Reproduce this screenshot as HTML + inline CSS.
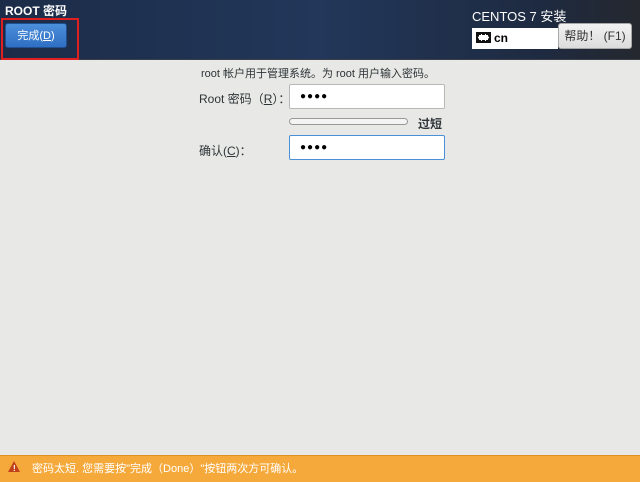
<!DOCTYPE html>
<html><head><meta charset="utf-8"><style>
body{margin:0;width:640px;height:481px;overflow:hidden;background:#e8e8e7;font-family:"Liberation Sans","Noto Sans CJK SC",sans-serif;position:relative}
.hdr{position:absolute;left:0;top:0;width:640px;height:59px;background:linear-gradient(90deg,#1c2c48 0%,#22375a 50%,#1e2a40 85%,#25282e 100%);border-bottom:1px solid #3a3f47}
.a{position:absolute}
.t{color:#fff;font-size:12px}
.done{left:5px;top:23px;width:62px;height:25px;background:linear-gradient(#4c8fdb,#2f6fc4);border:1px solid #1f4f8f;border-radius:3px;color:#fff;font-size:11px;text-align:center;line-height:24px;box-sizing:border-box}
.red{left:1px;top:18px;width:78px;height:42px;border:2px solid #e02020;box-sizing:border-box}
.inp{background:#fff;border:1px solid #b8b8b8;box-sizing:border-box;border-radius:2px}
.lbl{font-size:12px;color:#2e3436}
.dots{font-size:10px;letter-spacing:1px;color:#000;padding-left:10px;line-height:23px}
</style></head><body>
<div class="hdr"></div>
<div class="a t" style="left:5px;top:2px;font-weight:bold">ROOT 密码</div>
<div class="a done">完成(<u>D</u>)</div>
<div class="a red"></div>
<div class="a t" style="left:472px;top:6px;font-size:13px">CENTOS 7 安装</div>
<div class="a" style="left:472px;top:28px;width:86px;height:21px;background:#fff;font-size:12px;font-weight:bold;line-height:21px">
<span style="display:inline-block;width:11px;height:7px;background:#fff;margin:0 3px 0 4px;vertical-align:-1px;border:2px solid #111;outline:1px dashed #111;outline-offset:-3px"></span>cn</div>
<div class="a" style="left:558px;top:23px;width:74px;height:26px;background:linear-gradient(#f2f2f2,#dcdcdc);border:1px solid #a8a8a8;border-radius:3px;box-sizing:border-box;font-size:12px;color:#333;text-align:center;line-height:25px">帮助！ (F1)</div>
<div class="a lbl" style="left:0;width:636px;text-align:center;top:65px;font-size:11px">root 帐户用于管理系统。为 root 用户输入密码。</div>
<div class="a lbl" style="left:199px;top:90px">Root 密码（<u>R</u>）：</div>
<div class="a inp dots" style="left:289px;top:84px;width:156px;height:25px">●●●●</div>
<div class="a" style="left:289px;top:118px;width:119px;height:7px;border:1px solid #999;border-radius:4px;background:#f4f4f4;box-sizing:border-box"></div>
<div class="a lbl" style="left:418px;top:115px;font-weight:bold">过短</div>
<div class="a lbl" style="left:199px;top:142px">确认(<u>C</u>)：</div>
<div class="a inp dots" style="left:289px;top:135px;width:156px;height:25px;border:1px solid #4a90d9">●●●●</div>
<div class="a" style="left:0;top:455px;width:640px;height:26px;background:#f6a93b;border-top:1px solid #e09020"></div>
<div class="a" style="left:8px;top:461px;width:0;height:0;border-left:6px solid transparent;border-right:6px solid transparent;border-bottom:11px solid #c0401a"></div>
<div class="a" style="left:13px;top:464px;font-size:8px;color:#fff;font-weight:bold">!</div>
<div class="a" style="left:32px;top:460px;font-size:11px;color:#fff">密码太短. 您需要按"完成（Done）"按钮两次方可确认。</div>
</body></html>
